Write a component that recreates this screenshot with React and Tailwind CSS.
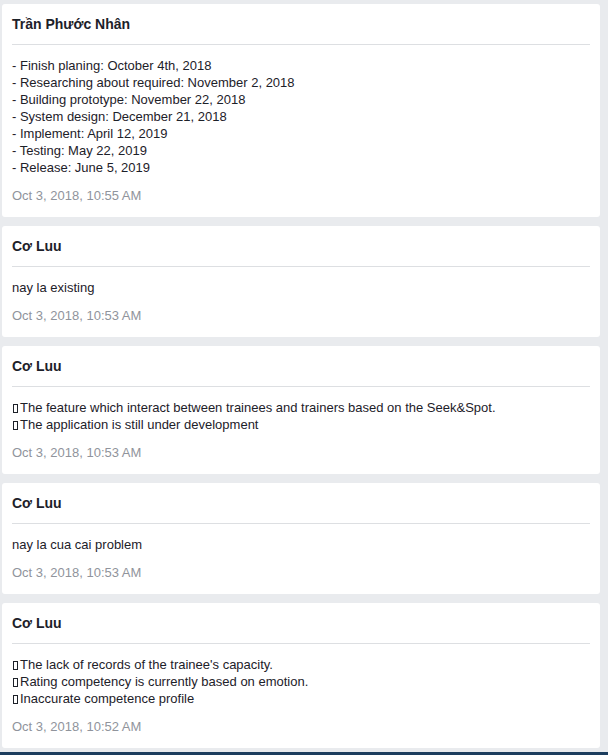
import React from "react";

const posts = [
  {
    name: "Trần Phước Nhân",
    lines: [
      "- Finish planing: October 4th, 2018",
      "- Researching about required: November 2, 2018",
      "- Building prototype: November 22, 2018",
      "- System design: December 21, 2018",
      "- Implement: April 12, 2019",
      "- Testing: May 22, 2019",
      "- Release: June 5, 2019",
    ],
    tofu: false,
    time: "Oct 3, 2018, 10:55 AM",
  },
  { name: "Cơ Luu", lines: ["nay la existing"], tofu: false, time: "Oct 3, 2018, 10:53 AM" },
  {
    name: "Cơ Luu",
    lines: [
      "The feature which interact between trainees and trainers based on the Seek&Spot.",
      "The application is still under development",
    ],
    tofu: true,
    time: "Oct 3, 2018, 10:53 AM",
  },
  { name: "Cơ Luu", lines: ["nay la cua cai problem"], tofu: false, time: "Oct 3, 2018, 10:53 AM" },
  {
    name: "Cơ Luu",
    lines: [
      "The lack of records of the trainee's capacity.",
      "Rating competency is currently based on emotion.",
      "Inaccurate competence profile",
    ],
    tofu: true,
    time: "Oct 3, 2018, 10:52 AM",
  },
];

function Tofu() {
  return (
    <span className="inline-block w-[5px] h-[9px] border border-[#1d2129] mr-[2px] ml-[1px] align-[-1px]" />
  );
}

export default function App() {
  return (
    <div className="min-h-[755px] bg-[#e9ebee] pt-[4px] font-['Liberation_Sans',Arial,sans-serif]">
      <div className="flex flex-col gap-[9px] ml-[2px] mr-[8px]">
        {posts.map((p, i) => (
          <div key={i} className="bg-white rounded-[3px] px-[10px] pt-[10px] pb-[13px]">
            <div className="text-[14px] leading-[20px] font-bold text-[#1d2129]">{p.name}</div>
            <div className="mt-[10px] h-px bg-[#dddfe2]" />
            <div className="mt-[12px] text-[13px] leading-[17px] text-[#1d2129]">
              {p.lines.map((l, j) => (
                <div key={j}>
                  {p.tofu && <Tofu />}
                  {l}
                </div>
              ))}
            </div>
            <div className="mt-[11px] text-[13px] leading-[17px] text-[#90949c]">{p.time}</div>
          </div>
        ))}
      </div>
      <div className="mt-[4px] h-[6px] bg-[#1c3d5e]" />
    </div>
  );
}
